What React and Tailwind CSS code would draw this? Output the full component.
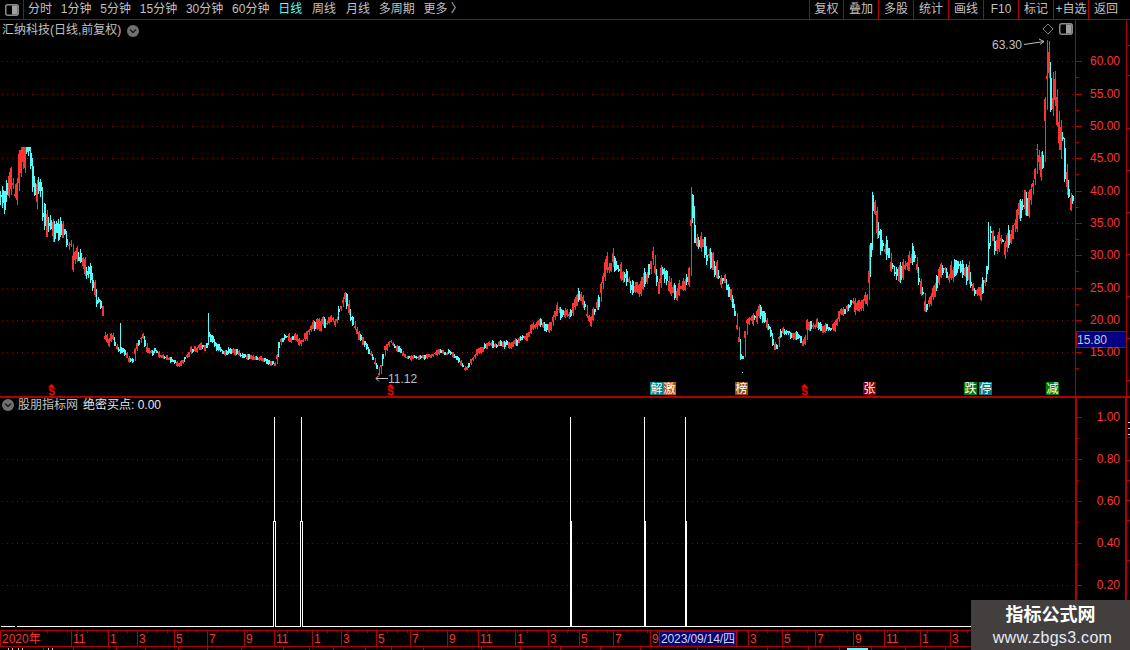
import React from "react";

const RED = "#ff3232";
const CYAN = "#54fcfc";
const LINE = "#b00000";

const pts = [[0,205],[2,208],[4,215],[9,172],[13,192],[18,168],[24,160],[27,150],[30,172],[34,180],[36,186],[40,195],[41,214],[45,222],[50,228],[55,226],[60,232],[65,237],[70,247],[72,262],[77,258],[85,265],[90,272],[93,282],[95,298],[100,305],[103,316],[104,338],[108,342],[111,334],[115,346],[120,350],[125,354],[128,360],[132,362],[135,347],[140,338],[143,335],[145,350],[150,353],[155,350],[160,355],[170,360],[178,365],[185,358],[190,350],[200,346],[205,350],[208,335],[215,345],[222,350],[230,350],[240,355],[250,357],[260,358],[270,362],[275,364],[278,345],[285,335],[290,340],[295,338],[300,342],[305,335],[312,325],[320,322],[328,320],[335,322],[340,308],[345,298],[350,315],[355,325],[360,335],[368,350],[375,365],[378,375],[383,352],[390,340],[398,350],[405,356],[415,358],[425,358],[435,355],[448,352],[455,358],[465,370],[470,360],[478,350],[490,342],[500,344],[510,345],[520,340],[530,330],[540,323],[550,325],[558,312],[565,315],[572,310],[580,295],[590,322],[597,300],[605,270],[612,262],[620,268],[628,285],[635,295],[645,275],[652,256],[658,282],[663,268],[670,288],[676,296],[683,285],[688,268],[691,200],[694,232],[700,248],[708,258],[716,272],[724,282],[730,298],[735,320],[739,345],[741,368],[745,325],[752,318],[760,308],[768,325],[775,350],[780,332],[788,330],[795,336],[803,344],[806,325],[815,322],[823,328],[832,328],[840,315],[848,305],[860,305],[866,296],[869,265],[872,200],[878,232],[885,245],[892,268],[898,278],[905,268],[912,255],[918,280],[925,312],[932,295],[940,270],[950,272],[960,262],[968,275],[975,298],[985,285],[990,232],[996,250],[1005,248],[1012,240],[1020,215],[1030,200],[1033,180],[1037,145],[1041,160],[1047,62],[1051,110],[1055,95],[1059,130],[1063,150],[1068,185],[1074,208]];

const interp = (x) => {
  for (let i = 1; i < pts.length; i++) {
    if (x <= pts[i][0]) {
      const [a, b] = pts[i - 1];
      const [c, d] = pts[i];
      return b + ((d - b) * (x - a)) / (c - a || 1);
    }
  }
  return pts[pts.length - 1][1];
};

const makeCandles = () => {
  let s = 12345;
  const rnd = () => {
    s = (s * 1664525 + 1013904223) % 4294967296;
    return s / 4294967296;
  };
  const spikes = { 120: 323, 208: 313, 690: 187, 742: 372, 872: 192, 1046: 40, 1052: 72, 988: 222, 344: 292 };
  const out = [];
  let walk = 0;
  let prev = interp(0);
  for (let x = 0; x < 1074; x += 2) {
    const y = interp(x);
    const slope = interp(x + 2) - y;
    const amp = 2 + Math.max(0, 360 - y) * 0.085;
    walk = 0.55 * walk + (rnd() - 0.5) * amp * 1.2;
    const c = y + walk;
    const h = 0.8 + rnd() * amp * 0.8;
    const up = slope < -0.5 ? rnd() < 0.78 : slope > 0.5 ? rnd() < 0.38 : rnd() < 0.55;
    const floor = x < 60 ? 147 : x < 1030 && !spikes[x] ? 190 : 40;
    let top = Math.max(floor, Math.min(c - h - rnd() * amp * 0.45, prev));
    let bottom = Math.max(c + h + rnd() * amp * 0.45, prev);
    if (spikes[x]) top = spikes[x];
    if (x === 102 || x === 104) { top = Math.max(top, y - 6); bottom = Math.min(bottom, y + 6); }
    prev = c;
    const bt = Math.max(floor, Math.round(c - h));
    out.push({ x, up, bt, bh: Math.max(1, Math.round(c + h) - bt), top: Math.round(top), bottom: Math.round(bottom) });
  }
  return out;
};
const candles = makeCandles();

const prices = [["60.00",61],["55.00",94],["50.00",126],["45.00",158],["40.00",191],["35.00",223],["30.00",255],["25.00",288],["20.00",320],["15.00",352]];
const lower = [["1.00",417,false],["0.80",459,true],["0.60",501,true],["0.40",543,true],["0.20",585,true]];
const timeCells = [[0,"2020年"],[71,"11"],[108,"1"],[137,"3"],[174,"5"],[207,"7"],[244,"9"],[274,"11"],[312,"1"],[341,"3"],[376,"5"],[410,"7"],[447,"9"],[478,"11"],[515,"1"],[548,"3"],[579,"5"],[613,"7"],[650,"9"],[736,""],[748,"3"],[782,"5"],[815,"7"],[853,"9"],[884,"11"],[920,"1"],[950,"3"]];
const lastRow = [43,73,116,145,178,207,241,283,309,333,365,391,423,481,520,560,600,640,697,767,808,839,871,905,945];

const font = "font-['Liberation_Sans','Noto_Sans_CJK_SC',sans-serif]";

const Toggle = () => (
  <svg width="14" height="12" viewBox="0 0 14 12">
    <rect x="0.75" y="0.75" width="12.5" height="10.5" rx="2" fill="none" stroke="#8a8a8a" strokeWidth="1.5" />
    <rect x="7" y="1.5" width="5.5" height="9" fill="#a0a0a0" />
  </svg>
);

const Chevron = () => (
  <svg width="12" height="12" viewBox="0 0 12 12">
    <circle cx="6" cy="6" r="6" fill="#707070" />
    <path d="M3 4.6 L6 7.6 L9 4.6" fill="none" stroke="#1c1c1c" strokeWidth="1.4" />
  </svg>
);

const Dollar = ({ cls }) => (
  <div className={`absolute top-[364px] flex flex-col items-center text-[#ff0000] ${cls}`}>
    <svg width="7" height="3" viewBox="0 0 7 3"><path d="M3.5 0 L7 3 H0 Z" fill="#ff0000" /></svg>
    <span className="text-[10px] font-bold leading-[9px]">S</span>
  </div>
);

const Badge = ({ cls, children }) => (
  <div className={`absolute top-[362px] h-[13px] w-[13px] flex items-center justify-center text-[12px] leading-none text-white ${cls}`}>
    {children}
  </div>
);

const leftItems = [
  ["分时", "text-[#c0c0c0]"],
  ["1分钟", "text-[#c0c0c0]"],
  ["5分钟", "text-[#c0c0c0]"],
  ["15分钟", "text-[#c0c0c0]"],
  ["30分钟", "text-[#c0c0c0]"],
  ["60分钟", "text-[#c0c0c0]"],
  ["日线", "text-[#54fcfc]"],
  ["周线", "text-[#c0c0c0] ml-[1px]"],
  ["月线", "text-[#c0c0c0] ml-[1px]"],
  ["多周期", "text-[#c0c0c0]"],
  ["更多 〉", "text-[#c0c0c0]"],
];
const rightItems = ["复权", "叠加", "多股", "统计", "画线", "F10", "标记", "+自选", "返回"];

function Toolbar() {
  return (
    <div className="flex h-[20px] items-stretch border-b border-[#b00000] text-[12px] leading-[19px]">
      <div className="flex w-[24px] items-center justify-center border-r border-[#b00000]"><Toggle /></div>
      <div className="flex flex-1 gap-[8.8px] pl-[4px]">
        {leftItems.map(([t, c]) => <span key={t} className={`whitespace-nowrap ${c}`}>{t}</span>)}
      </div>
      <div className="flex w-[320px]">
        {rightItems.map((t) => (
          <div key={t} className="flex w-[35px] items-center justify-center whitespace-nowrap border-l border-[#b00000] text-[#c0c0c0] first:w-[34px]">{t}</div>
        ))}
      </div>
      <div className="w-px" />
    </div>
  );
}

function MainChart() {
  return (
    <div className="relative h-[378px] border-b-2 border-[#b00000]">
      <svg width="1130" height="376" viewBox="0 20 1130 376" className="block">
        {prices.map(([, y]) => (
          <line key={y} x1="2" x2="1075" y1={y + 0.5} y2={y + 0.5} stroke="#8c0000" strokeDasharray="1 4" />
        ))}
        <g shapeRendering="crispEdges">
          {candles.map((k) => (
            <g key={k.x} fill={k.up ? RED : CYAN}>
              <rect x={k.x + (k.up ? 1 : 0)} y={k.top} width="1" height={Math.max(1, k.bottom - k.top)} />
              <rect x={k.x} y={k.bt} width="2" height={k.bh} />
            </g>
          ))}
          <rect x="869" y="245" width="1" height="28" fill={RED} />
          <rect x="1075" y="20" width="1" height="376" fill={LINE} />
          <rect x="1126" y="20" width="1" height="376" fill={LINE} />
          {prices.map(([, y]) => <rect key={y} x="1076" y={y} width="6" height="1" fill={LINE} />)}
          {prices.map(([, y]) => <rect key={y} x="1076" y={y + 16} width="3" height="1" fill={LINE} />)}
          {[45, 75, 128, 170, 212, 254, 296, 338, 380].map((y) => <rect key={y} x="1127" y={y} width="3" height="1" fill={LINE} />)}
          <rect x="1076" y="331" width="50" height="16" fill="#000080" stroke="#b00000" />
        </g>
        <g fontSize="12" fill={RED} textAnchor="end">
          {prices.map(([t, y]) => <text key={t} x="1120" y={y + 4}>{t}</text>)}
        </g>
        <text x="1077" y="344" fontSize="12" fill="#c8c8c8">15.80</text>
        <text x="992" y="49" fontSize="12" fill="#c0c0c0">63.30</text>
        <path d="M1024 44.5 L1044 41.5 M1039 39 L1044 41.5 L1040 44.5" fill="none" stroke="#c0c0c0" strokeWidth="1" />
        <text x="388" y="383" fontSize="12" fill="#c0c0c0">11.12</text>
        <path d="M376 378.5 H388 M379 375.5 L376 378.5 L379 381.5" fill="none" stroke="#c0c0c0" strokeWidth="1" />
        <path d="M1048 24 L1053 29 L1048 34 L1043 29 Z" fill="none" stroke="#7a7a7a" />
      </svg>

      <div className="absolute left-[2px] top-[3px] flex items-center gap-[6px] text-[12px] leading-[15px] text-[#c0c0c0]">
        <span>汇纳科技(日线,前复权)</span>
        <Chevron />
      </div>
      <div className="absolute left-[1059px] top-[3px]"><Toggle /></div>

      <Dollar cls="left-[48px]" />
      <Dollar cls="left-[387px]" />
      <Dollar cls="left-[801px]" />
      <Badge cls="left-[650px] bg-[#008080]">解</Badge>
      <Badge cls="left-[663px] bg-[#b05a20]">激</Badge>
      <Badge cls="left-[735px] bg-[#8b5014]">榜</Badge>
      <Badge cls="left-[863px] bg-[#800000]">张</Badge>
      <Badge cls="left-[964px] bg-[#008000]">跌</Badge>
      <Badge cls="left-[979px] bg-[#008080]">停</Badge>
      <div className="absolute left-[1045px] top-[362px] h-[13px] w-[1px] bg-[#000080]" />
      <Badge cls="left-[1046px] bg-[#008000]">减</Badge>
    </div>
  );
}

function IndicatorChart() {
  return (
    <div className="relative h-[232px]">
      <svg width="1130" height="232" viewBox="0 398 1130 232" className="block">
        {lower.filter((l) => l[2]).map(([, y]) => (
          <line key={y} x1="2" x2="1075" y1={y + 0.5} y2={y + 0.5} stroke="#8c0000" strokeDasharray="1 4" />
        ))}
        <g shapeRendering="crispEdges">
          <rect x="1" y="626" width="14" height="1" fill="#fff" />
          <rect x="17" y="626" width="1058" height="1" fill="#fff" />
          {[274, 301].map((x) => (
            <g key={x}>
              <rect x={x} y="520" width="1" height="107" fill="#000" />
              <rect x={x - 1} y="521" width="1" height="106" fill="#fff" />
              <rect x={x + 1} y="521" width="1" height="106" fill="#fff" />
              <rect x={x} y="417" width="1" height="105" fill="#fff" />
            </g>
          ))}
          {[570, 644, 685].map((x) => (
            <g key={x} fill="#fff">
              <rect x={x} y="417" width="1" height="105" />
              <rect x={x} y="521" width="2" height="106" />
            </g>
          ))}
          <rect x="1075" y="398" width="2" height="232" fill={LINE} />
          <rect x="1125" y="398" width="2" height="232" fill={LINE} />
          {lower.map(([, y]) => <rect key={y} x="1077" y={y} width="5" height="1" fill={LINE} />)}
          {lower.map(([, y]) => <rect key={y} x="1077" y={y + 21} width="2" height="1" fill={LINE} />)}
          {[422, 428, 434].map((y) => <rect key={y} x="1128" y={y} width="2" height="1" fill="#d0d0d0" />)}
          {[437, 460, 480, 500, 520, 560, 600].map((y) => <rect key={y} x="1127" y={y} width="3" height="1" fill={LINE} />)}
        </g>
        <g fontSize="12" fill={RED} textAnchor="end">
          {lower.map(([t, y]) => <text key={t} x="1120" y={y + 4}>{t}</text>)}
        </g>
      </svg>
      <div className="absolute left-[2px] top-0 flex h-[14px] items-center text-[12px] leading-none text-[#c0c0c0]">
        <Chevron />
        <span className="ml-[4px]">股朋指标网</span>
        <span className="ml-[5px] text-[#e8e8e8]">绝密买点: 0.00</span>
      </div>
    </div>
  );
}

function TimeAxis() {
  return (
    <svg width="1130" height="20" viewBox="0 630 1130 20" className="block">
      <g shapeRendering="crispEdges">
        <rect x="0" y="630" width="1130" height="1" fill={LINE} />
        <rect x="0" y="646" width="1130" height="1" fill={LINE} />
        {Array.from({ length: 108 }, (_, i) => (
          <rect key={i} x={47 + i * 10} y="631" width="1" height="2" fill={LINE} />
        ))}
        {timeCells.map(([x]) => <rect key={x} x={x} y="631" width="1" height="15" fill={LINE} />)}
        {lastRow.map((x) => <rect key={x} x={x} y="647" width="1" height="3" fill={LINE} />)}
        <rect x="659" y="631" width="77" height="15" fill="#000080" stroke="#b00000" />
        {[8, 12, 18, 22, 48, 52].map((x) => <rect key={x} x={x} y="648" width="1" height="2" fill="#c0c0c0" />)}
        <rect x="847" y="648" width="21" height="2" fill={CYAN} />
      </g>
      <g fontSize="12" fill={RED}>
        {timeCells.map(([x, t]) => t && <text key={x} x={x + 2} y="643">{t}</text>)}
      </g>
      <text x="661" y="643" fontSize="12" fill="#d8d8d8" textLength="74">2023/09/14/四</text>
    </svg>
  );
}

export default function App() {
  return (
    <div className={`relative h-[650px] w-[1130px] overflow-hidden bg-black ${font}`}>
      <Toolbar />
      <MainChart />
      <IndicatorChart />
      <TimeAxis />
      <div className="absolute bottom-0 right-0 flex h-[50px] w-[159px] flex-col items-center bg-[#443f3f]">
        <span className="mt-[3px] text-[18px] font-bold leading-[25px] text-white">指标公式网</span>
        <span className="ml-[4px] text-[16px] leading-[20px] tracking-[0.3px] text-[#e4ecf7]">www.zbgs3.com</span>
      </div>
    </div>
  );
}
